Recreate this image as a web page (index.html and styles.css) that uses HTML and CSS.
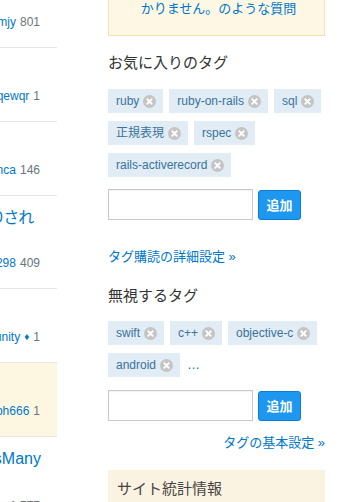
FILE: index.html
```html
<!DOCTYPE html>
<html lang="ja">
<head>
<meta charset="utf-8">
<title>Stack Overflow</title>
<link rel="stylesheet" href="styles.css">
</head>
<body>
<div class="page">
  <div class="questions">
    <div class="q q-first">
      <div class="user"><a class="name">tamjy</a><span class="rep">801</span></div>
    </div>
    <div class="q">
      <div class="user"><a class="name">qewqr</a><span class="rep">1</span></div>
    </div>
    <div class="q">
      <div class="user"><a class="name">bianca</a><span class="rep">146</span></div>
    </div>
    <div class="q q-tall">
      <div class="title"><a>ファイルが取り出されて削除されたりされ</a></div>
      <div class="user"><a class="name">user3298</a><span class="rep">409</span></div>
    </div>
    <div class="q">
      <div class="user"><a class="name">community</a><span class="mod">♦</span><span class="rep">1</span></div>
    </div>
    <div class="q q-hl">
      <div class="user"><a class="name">ph666</a><span class="rep">1</span></div>
    </div>
    <div class="q q-last">
      <div class="title"><a>has_many と hasMany</a></div>
      <div class="title"><a>&nbsp;</a></div>
      <div class="user"><span class="rep">1,777</span></div>
    </div>
  </div>

  <aside class="sidebar">
    <div class="notice"><a>かりません。のような質問</a></div>

    <h4 class="heading fav">お気に入りのタグ</h4>
    <div class="tags">
      <span class="tag">ruby<svg class="x" viewBox="0 0 14 14"><circle cx="7" cy="7" r="7"/><path d="M4.6 4.6l4.8 4.8M9.4 4.6l-4.8 4.8"/></svg></span>
      <span class="tag">ruby-on-rails<svg class="x" viewBox="0 0 14 14"><circle cx="7" cy="7" r="7"/><path d="M4.6 4.6l4.8 4.8M9.4 4.6l-4.8 4.8"/></svg></span>
      <span class="tag">sql<svg class="x" viewBox="0 0 14 14"><circle cx="7" cy="7" r="7"/><path d="M4.6 4.6l4.8 4.8M9.4 4.6l-4.8 4.8"/></svg></span>
      <span class="tag">正規表現<svg class="x" viewBox="0 0 14 14"><circle cx="7" cy="7" r="7"/><path d="M4.6 4.6l4.8 4.8M9.4 4.6l-4.8 4.8"/></svg></span>
      <span class="tag">rspec<svg class="x" viewBox="0 0 14 14"><circle cx="7" cy="7" r="7"/><path d="M4.6 4.6l4.8 4.8M9.4 4.6l-4.8 4.8"/></svg></span>
      <span class="tag">rails-activerecord<svg class="x" viewBox="0 0 14 14"><circle cx="7" cy="7" r="7"/><path d="M4.6 4.6l4.8 4.8M9.4 4.6l-4.8 4.8"/></svg></span>
    </div>
    <div class="addtag first-add">
      <input class="taginput" type="text">
      <button class="btn">追加</button>
    </div>
    <a class="more">タグ購読の詳細設定 »</a>

    <h4 class="heading ign">無視するタグ</h4>
    <div class="tags tags-ign">
      <span class="tag">swift<svg class="x" viewBox="0 0 14 14"><circle cx="7" cy="7" r="7"/><path d="M4.6 4.6l4.8 4.8M9.4 4.6l-4.8 4.8"/></svg></span>
      <span class="tag">c++<svg class="x" viewBox="0 0 14 14"><circle cx="7" cy="7" r="7"/><path d="M4.6 4.6l4.8 4.8M9.4 4.6l-4.8 4.8"/></svg></span>
      <span class="tag">objective-c<svg class="x" viewBox="0 0 14 14"><circle cx="7" cy="7" r="7"/><path d="M4.6 4.6l4.8 4.8M9.4 4.6l-4.8 4.8"/></svg></span>
      <span class="tag">android<svg class="x" viewBox="0 0 14 14"><circle cx="7" cy="7" r="7"/><path d="M4.6 4.6l4.8 4.8M9.4 4.6l-4.8 4.8"/></svg></span>
      <a class="ellipsis">…</a>
    </div>
    <div class="addtag second-add">
      <input class="taginput" type="text">
      <button class="btn">追加</button>
    </div>
    <a class="more more-right">タグの基本設定 »</a>

    <div class="stats">
      <h4 class="stats-title">サイト統計情報</h4>
    </div>
  </aside>
</div>
</body>
</html>
```

FILE: styles.css
```css
html, body {
  margin: 0;
  padding: 0;
  background: #fff;
}

body {
  font-family: "Liberation Sans", "Noto Sans CJK JP", sans-serif;
  color: #333;
  overflow: hidden;
}

a {
  color: #0077cc;
  text-decoration: none;
}

.page {
  display: flex;
  align-items: flex-start;
}

/* ---------- question list (left, clipped) ---------- */
.questions {
  width: 57px;
  flex-shrink: 0;
  overflow: hidden;
}

.q {
  height: 74px;
  box-sizing: border-box;
  border-bottom: 1px solid #e4e6e8;
  display: flex;
  flex-direction: column;
  padding-bottom: 17px;
}

.q-first {
  height: 48px;
}

.q-tall {
  height: 93px;
  padding-top: 11px;
}

.q-hl {
  background: #fdf7e2;
}

.q-last {
  height: 90px;
  padding-top: 11px;
  border-bottom: 0;
}

.title {
  display: flex;
  justify-content: flex-end;
  white-space: nowrap;
  font-size: 16px;
  line-height: 22px;
  font-feature-settings: "palt";
}

.q-tall .title {
  padding-right: 23px;
}

.q-last .title {
  padding-right: 16px;
}

.title a {
  flex-shrink: 0;
}

.user {
  margin-top: auto;
  display: flex;
  justify-content: flex-end;
  white-space: nowrap;
  font-size: 12px;
  line-height: 16px;
  padding-right: 17px;
}

.q-last .user {
  margin-top: 0;
  padding-top: 6px;
}

.user > * {
  flex-shrink: 0;
}

.rep {
  color: #6a737c;
  margin-left: 4px;
}

.mod {
  color: #0077cc;
  font-size: 10px;
  margin-left: 4px;
}

/* ---------- sidebar (right) ---------- */
.sidebar {
  width: 217px;
  margin-left: 51px;
  flex-shrink: 0;
}

.notice {
  height: 36px;
  box-sizing: border-box;
  background: #fdf7e3;
  border: 1px solid #f1e4b8;
  border-top: 0;
  text-align: center;
  font-size: 13px;
  line-height: 18px;
  padding-left: 4px;
}

.heading {
  margin: 0;
  font-size: 15px;
  line-height: 20px;
  font-weight: normal;
  color: #333;
}

.fav {
  margin-top: 17px;
}

.ign {
  margin-top: 20px;
}

.tags {
  display: flex;
  flex-wrap: wrap;
  align-items: center;
  column-gap: 6px;
  row-gap: 8px;
  margin-top: 16px;
}

.tags-ign {
  margin-top: 15px;
}

.tag {
  display: inline-flex;
  align-items: center;
  height: 24px;
  padding: 0 7px 0 8px;
  background: #e1ecf4;
  color: #39739d;
  font-size: 12px;
  line-height: 24px;
  white-space: nowrap;
}

.x {
  width: 13px;
  height: 13px;
  margin-left: 4px;
}

.x circle {
  fill: #c4c4c4;
}

.x path {
  stroke: #fff;
  stroke-width: 2;
  stroke-linecap: round;
  fill: none;
}

.ellipsis {
  font-size: 13px;
  line-height: 24px;
  margin-left: 1px;
}

.addtag {
  display: flex;
  align-items: center;
  gap: 5px;
}

.first-add {
  margin-top: 12px;
}

.second-add {
  margin-top: 13px;
}

.taginput {
  width: 145px;
  height: 31px;
  box-sizing: border-box;
  margin: 0;
  padding: 0 6px;
  border: 1px solid #c9c9c9;
  border-radius: 0;
  background: #fff;
  box-shadow: inset 0 1px 1px rgba(0, 0, 0, 0.05);
  outline: none;
}

.btn {
  width: 43px;
  height: 30px;
  box-sizing: border-box;
  margin: 0;
  padding: 0;
  border: 1px solid #0c7dd3;
  border-radius: 3px;
  background: #1d97ef;
  color: #fff;
  font-family: "Liberation Sans", "Noto Sans CJK JP", sans-serif;
  font-size: 13px;
  font-weight: bold;
}

.more {
  display: block;
  margin-top: 28px;
  font-size: 13px;
  line-height: 18px;
}

.more-right {
  margin-top: 13px;
  text-align: right;
}

.stats {
  margin-top: 18px;
  background: #fbf3e1;
  padding: 9px 9px 12px;
}

.stats-title {
  margin: 0;
  font-size: 15px;
  line-height: 20px;
  font-weight: normal;
  color: #444;
}
```
